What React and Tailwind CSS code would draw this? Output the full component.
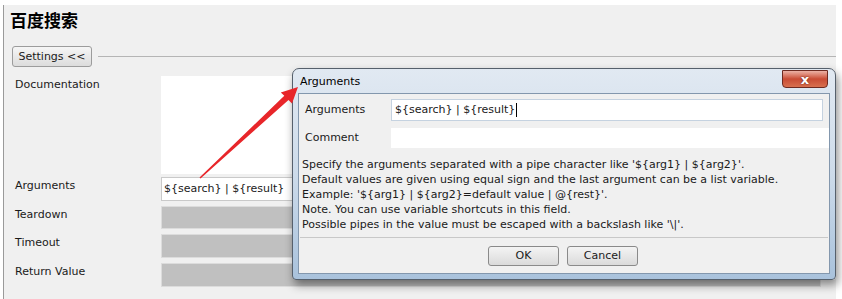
export default function App() {
  const font = { fontFamily: "'DejaVu Sans', 'Noto Sans CJK SC', sans-serif" };
  return (
    <div
      className="relative w-[842px] h-[299px] overflow-hidden bg-white text-[11px] text-[#1a1a1a]"
      style={font}
    >
      {/* main panel */}
      <div className="ml-[3px] mt-[5px] w-[833px] h-[294px] border-l border-[#9a9a9a] bg-[#f0f0f0] flex flex-col">
        <div className="pl-[6px] pt-[3px] h-[29px] text-[17px] font-bold leading-[24px] text-black [font-family:'Noto_Sans_CJK_SC',sans-serif]">
          百度搜索
        </div>
        <div className="mt-[12px] flex items-center h-[21px] pl-[8px]">
          <div className="w-[80px] h-[21px] rounded-[3px] border border-[#9c9c9c] bg-gradient-to-b from-[#f6f6f6] to-[#dcdcdc] flex items-center justify-center leading-none">
            Settings &lt;&lt;
          </div>
          <div className="ml-[6px] flex-1 h-px bg-[#b5b5b5]" />
        </div>
        {/* form */}
        <div className="mt-[9px] flex flex-col pl-[11px]">
          <div className="flex h-[98px]">
            <div className="w-[146px] pt-[2px] leading-[14px]">Documentation</div>
            <div className="w-[660px] h-[98px] bg-white" />
          </div>
          <div className="mt-[3px] flex h-[24px]">
            <div className="w-[146px] pt-[2px] leading-[14px]">Arguments</div>
            <div className="w-[660px] h-[24px] bg-white border border-[#c9c9c9] pl-[2px] flex items-center">
              ${"{search}"} | ${"{result}"}
            </div>
          </div>
          <div className="mt-[5px] flex h-[23px]">
            <div className="w-[146px] pt-[2px] leading-[14px]">Teardown</div>
            <div className="w-[660px] h-[23px] bg-[#c0c0c0] border border-[#dcdcdc]" />
          </div>
          <div className="mt-[5px] flex h-[24px]">
            <div className="w-[146px] pt-[2px] leading-[14px]">Timeout</div>
            <div className="w-[660px] h-[24px] bg-[#c0c0c0] border border-[#dcdcdc]" />
          </div>
          <div className="mt-[5px] flex h-[24px]">
            <div className="w-[146px] pt-[2px] leading-[14px]">Return Value</div>
            <div className="w-[660px] h-[24px] bg-[#c0c0c0] border border-[#dcdcdc]" />
          </div>
        </div>
      </div>

      {/* dialog */}
      <div className="absolute left-[292px] top-[68px] w-[544px] h-[212px] rounded-t-[7px] rounded-b-[4px] border border-[#56606c] bg-gradient-to-b from-[#e1e9f2] via-[#cddbea] to-[#a9c2dc] shadow-[2px_5px_10px_rgba(0,0,0,0.45)] flex flex-col px-[5px] pb-[5px]">
        <div className="h-[24px] flex items-start justify-between">
          <div className="pl-[2px] pt-[6px] leading-[14px] text-black">Arguments</div>
          <div className="mt-[1px] mr-[2px] w-[46px] h-[18px] rounded-b-[4px] border border-[#6e2a20] bg-gradient-to-b from-[#ebb1a5] via-[#c94b34] to-[#d8704f] flex items-center justify-center">
            <span className="text-white font-bold text-[13px] leading-none [text-shadow:0_0_2px_#5a1a10]">x</span>
          </div>
        </div>
        <div className="flex-1 border border-[#8397ad] bg-[#f0f0f0] flex flex-col">
          <div className="mt-[5px] flex items-center h-[22px]">
            <div className="w-[92px] pl-[6px]">Arguments</div>
            <div className="w-[432px] h-[22px] bg-white border border-[#c5d2e0] pl-[3px] flex items-center">
              ${"{search}"} | ${"{result}"}
              <span className="ml-px w-px h-[14px] bg-black" />
            </div>
          </div>
          <div className="mt-[7px] flex items-center h-[20px]">
            <div className="w-[92px] pl-[6px]">Comment</div>
            <div className="flex-1 h-[20px] bg-white" />
          </div>
          <div className="mt-[9px] pl-[3px] leading-[15px]">
            <div>Specify the arguments separated with a pipe character like '${"{arg1}"} | ${"{arg2}"}'.</div>
            <div>Default values are given using equal sign and the last argument can be a list variable.</div>
            <div>Example: '${"{arg1}"} | ${"{arg2}"}=default value | @{"{rest}"}'.</div>
            <div>Note. You can use variable shortcuts in this field.</div>
            <div>Possible pipes in the value must be escaped with a backslash like '\|'.</div>
          </div>
          <div className="mt-[5px] mx-[1px] h-px bg-[#c8c8c8]" />
          <div className="mt-[8px] flex gap-[8px] pl-[189px]">
            <div className="w-[71px] h-[20px] rounded-[3px] border border-[#8a8a8a] bg-gradient-to-b from-[#f4f4f4] to-[#dadada] flex items-center justify-center">OK</div>
            <div className="w-[71px] h-[20px] rounded-[3px] border border-[#8a8a8a] bg-gradient-to-b from-[#f4f4f4] to-[#dadada] flex items-center justify-center">Cancel</div>
          </div>
        </div>
      </div>

      {/* red arrow */}
      <svg className="absolute left-0 top-0 pointer-events-none" width="842" height="299">
        <polygon
          points="199.5,177.4 284.3,95.8 280.8,92.4 298,87 292.0,103.4 288.5,100.0 200.5,178.6"
          fill="#e8262a"
        />
      </svg>
    </div>
  );
}
